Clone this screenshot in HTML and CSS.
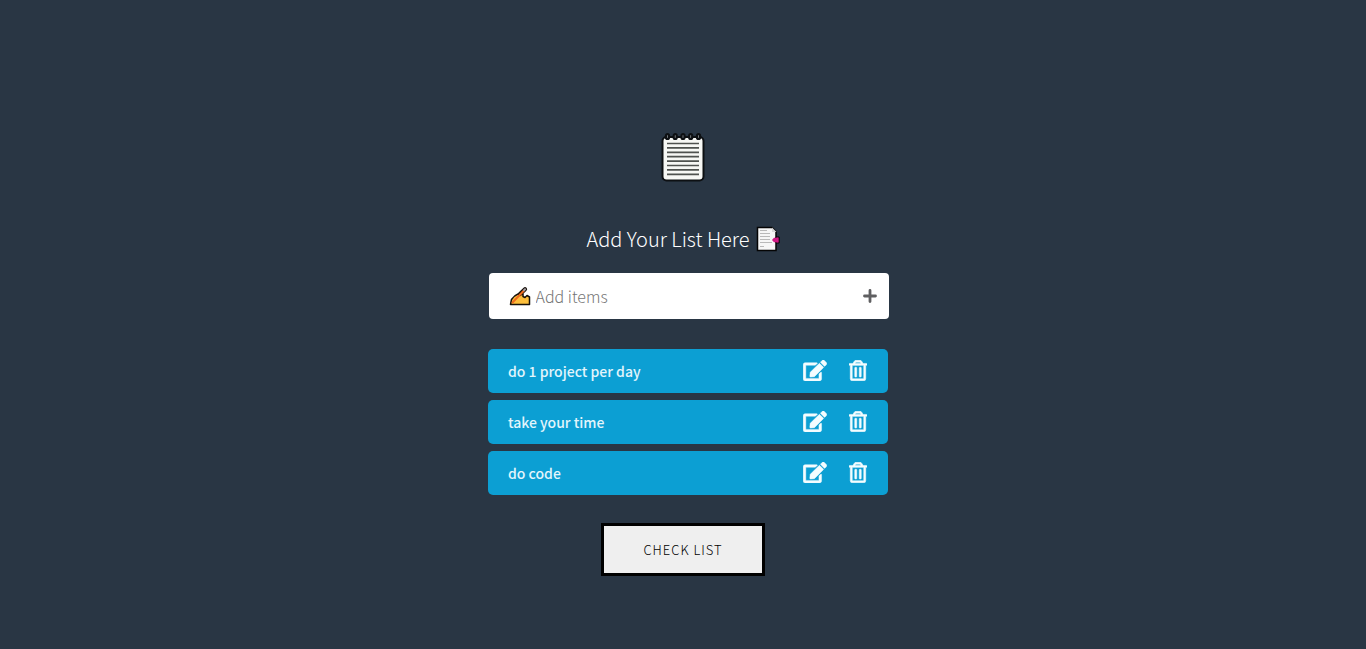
FILE: index.html
```html
<!DOCTYPE html>
<html lang="en">
<head>
<meta charset="utf-8">
<meta name="viewport" content="width=device-width, initial-scale=1">
<title>Add Your List</title>
<link rel="stylesheet" href="styles.css">
</head>
<body>
<svg class="symbols" aria-hidden="true">
  <symbol id="edit" viewBox="0 0 576 512"><path d="M402.6 83.200l90.200 90.200c3.800 3.800 3.800 10 0 13.800L274.400 405.600l-92.800 10.300c-12.400 1.400-22.900-9.100-21.500-21.500l10.300-92.800L388.800 83.200c3.800-3.800 10-3.800 13.800 0zm162-22.900l-48.800-48.800c-15.200-15.200-39.900-15.200-55.200 0l-35.400 35.400c-3.800 3.800-3.800 10 0 13.800l90.200 90.200c3.800 3.800 10 3.800 13.800 0l35.400-35.400c15.200-15.300 15.200-40 0-55.200zM384 346.200V448H64V128h229.800c3.200 0 6.200-1.300 8.500-3.500l40-40c7.600-7.600 2.200-20.500-8.500-20.500H48C21.500 64 0 85.500 0 112v352c0 26.500 21.500 48 48 48h352c26.500 0 48-21.500 48-48V306.200c0-10.700-12.900-16-20.500-8.500l-40 40c-2.200 2.300-3.500 5.300-3.500 8.500z" stroke="currentColor" stroke-width="10"/></symbol>
  <symbol id="trash" viewBox="0 0 448 512"><path d="M268 416h24a12 12 0 0 0 12-12V188a12 12 0 0 0-12-12h-24a12 12 0 0 0-12 12v216a12 12 0 0 0 12 12zM432 80h-82.400l-34-56.700A48 48 0 0 0 274.400 0H173.600a48 48 0 0 0-41.200 23.300L98.400 80H16A16 16 0 0 0 0 96v16a16 16 0 0 0 16 16h16v336a48 48 0 0 0 48 48h288a48 48 0 0 0 48-48V128h16a16 16 0 0 0 16-16V96a16 16 0 0 0-16-16zM171.800 51a6 6 0 0 1 5.200-3h94a6 6 0 0 1 5.200 3l17.400 29H154.400zM368 464H80V128h288zm-212-48h24a12 12 0 0 0 12-12V188a12 12 0 0 0-12-12h-24a12 12 0 0 0-12 12v216a12 12 0 0 0 12 12z" stroke="currentColor" stroke-width="14"/></symbol>
</svg>
<main class="todo">
  <svg class="logo" viewBox="0 0 44 50" role="img" aria-label="Notepad">
    <rect x="1.500" y="5" width="41" height="43.500" rx="4" fill="#f7f8f5" stroke="#0d1013" stroke-width="2"/>
    <g fill="#8b9095" stroke="#0d1013" stroke-width="2.200">
      <rect x="5" y="2" width="3" height="5" rx="1.500"/><rect x="12.700" y="2" width="3" height="5" rx="1.500"/><rect x="20.500" y="2" width="3" height="5" rx="1.500"/><rect x="28.200" y="2" width="3" height="5" rx="1.500"/><rect x="36" y="2" width="3" height="5" rx="1.500"/>
    </g>
    <path d="M6 11.500h32M6 15.900h32M6 20.300h32M6 24.700h32M6 29.100h32M6 33.500h32M6 37.900h32M6 42.300h32" stroke="#4f524f" stroke-width="1.700"/>
  </svg>
  <h1 class="title">
    <span>Add Your List Here</span>
    <svg class="title-icon" viewBox="0 0 24 26" aria-hidden="true">
      <path d="M1.500 1.500H16L20 5.500V24.500H1.500Z" fill="#f6f6f6" stroke="#050505" stroke-width="1.500"/>
      <path d="M16 1.500V6h4.500" fill="#d8d8d8"/>
      <path d="M4 4.500h7M4 7.500h10M4 10.500h10M4 13.500h10M4 16.500h12M4 20.500h4" stroke="#b9b9b9"/>
      <path d="M20 11h3.200v6H20z" fill="#d01884" stroke="#050505"/>
      <path d="M16 14l2-2.200h4v4.400h-4z" fill="#d01884"/>
    </svg>
  </h1>
  <form class="add-form">
    <svg class="hand" viewBox="0 0 22 20" aria-hidden="true">
      <path d="M1.500 18.500L2.500 13.500Q5 9.500 9 8L14 8L14 10.500L16 11.500L18 9.500L20.500 11V18.500Z" fill="#fdbf3b" stroke="#17110a" stroke-width="1.500" stroke-linejoin="round"/>
      <path d="M11 8L16 3.200" stroke="#17110a" stroke-width="4.200" stroke-linecap="round"/>
      <path d="M3 17L15 4.500" stroke="#ee6c20" stroke-width="2"/>
      <path d="M15 4.200L16 3.200" stroke="#a8a0a6" stroke-width="2" stroke-linecap="round"/>
      <path d="M8 16Q9 13 12.500 11.500L15.500 13V17H8Z" fill="#fdbf3b"/>
    </svg>
    <input class="add-input" type="text" placeholder="Add items" aria-label="Add items">
    <button class="icon-button add-button" type="button" aria-label="Add">
      <svg viewBox="0 0 14 14"><path d="M7 1.500V12.500M1.500 7H12.500" stroke="#5f5f61" stroke-width="2.800" stroke-linecap="round"/></svg>
    </button>
  </form>
  <ul class="items">
    <li class="item"><span class="item-text">do 1 project per day</span>
      <button class="icon-button" type="button" aria-label="Edit do 1 project per day"><svg class="edit"><use href="#edit"/></svg></button>
      <button class="icon-button" type="button" aria-label="Delete do 1 project per day"><svg class="trash"><use href="#trash"/></svg></button></li>
    <li class="item"><span class="item-text">take your time</span>
      <button class="icon-button" type="button" aria-label="Edit take your time"><svg class="edit"><use href="#edit"/></svg></button>
      <button class="icon-button" type="button" aria-label="Delete take your time"><svg class="trash"><use href="#trash"/></svg></button></li>
    <li class="item"><span class="item-text">do code</span>
      <button class="icon-button" type="button" aria-label="Edit do code"><svg class="edit"><use href="#edit"/></svg></button>
      <button class="icon-button" type="button" aria-label="Delete do code"><svg class="trash"><use href="#trash"/></svg></button></li>
  </ul>
  <button class="check" type="button">CHECK LIST</button>
</main>
</body>
</html>
```
FILE: styles.css
```css
* {
  box-sizing: border-box;
}

body {
  margin: 0;
  min-height: 100vh;
  background: #293644;
  color: #fff;
  font-family: "Source Sans Pro", "Noto Sans CJK JP", "Open Sans", sans-serif;
  font-weight: 300;
}

.symbols {
  display: none;
}

.todo {
  display: flex;
  flex-direction: column;
  align-items: center;
  padding: 132px 16px 32px;
}

.logo {
  width: 44px;
  height: 50px;
}

.title {
  display: flex;
  align-items: center;
  gap: 6px;
  margin: 42px 0 0;
  font-size: 20px;
  font-weight: 300;
  line-height: 30px;
}

.title-icon {
  width: 24px;
  height: 26px;
}

.add-form,
.items {
  width: 100%;
  max-width: 400px;
  margin-left: 11px;
}

.add-form {
  display: flex;
  align-items: center;
  gap: 5px;
  height: 46px;
  margin-top: 19px;
  padding: 0 12px 0 20px;
  border-radius: 4px;
  background: #fff;
}

.hand {
  flex: none;
  width: 22px;
  height: 20px;
}

.add-input {
  flex: 1;
  min-width: 0;
  padding: 0;
  border: 0;
  outline: 0;
  background: transparent;
  color: #333;
  font: inherit;
  font-size: 16px;
  line-height: 26px;
}

.add-input::placeholder {
  color: #757575;
}

.icon-button {
  display: flex;
  padding: 0;
  border: 0;
  background: transparent;
  color: #f4fdff;
  cursor: pointer;
}

.icon-button svg {
  fill: currentColor;
}

.add-button svg {
  width: 14px;
  height: 14px;
}

.items {
  display: grid;
  gap: 7px;
  margin-top: 30px;
  margin-bottom: 0;
  margin-left: 10px;
  padding: 0;
  list-style: none;
}

.item {
  display: flex;
  align-items: center;
  gap: 22px;
  height: 44px;
  padding: 0 21px 2px 20px;
  border-radius: 5px;
  background: #0c9fd3;
}

.item-text {
  flex: 1;
  padding-top: 2px;
  color: #e2f5fc;
  font-size: 14px;
  font-weight: 500;
  line-height: 24px;
}

.edit {
  width: 24px;
  height: 21px;
}

.trash {
  width: 18px;
  height: 21px;
}

.check {
  margin-top: 28px;
  padding: 12px 39px;
  border: 3px solid #000;
  background: #efefef;
  color: #000;
  font: inherit;
  font-size: 13px;
  font-weight: 200;
  line-height: 23px;
  letter-spacing: 1px;
}
```
